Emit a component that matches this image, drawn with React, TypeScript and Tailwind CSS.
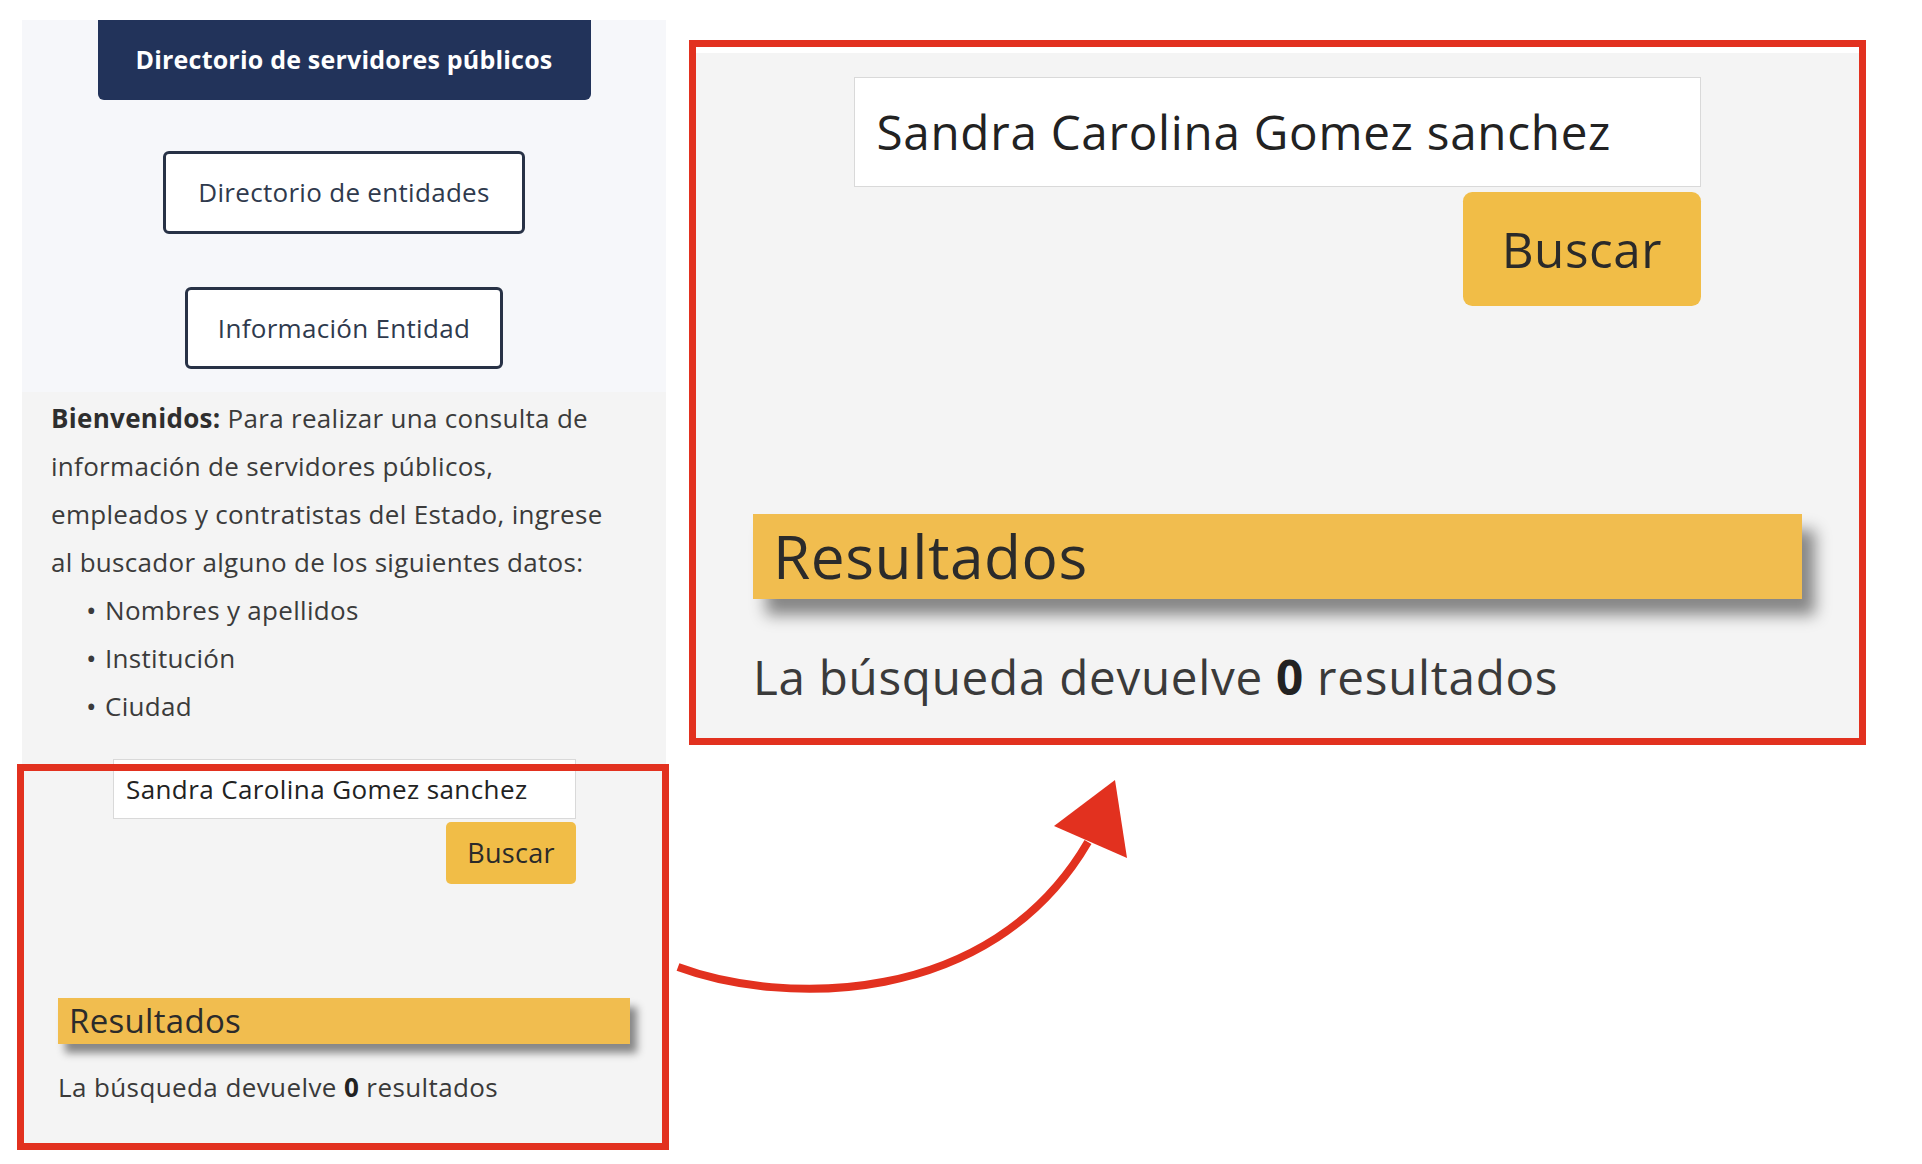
import type { ReactNode } from "react";

const items = ["Nombres y apellidos", "Institución", "Ciudad"];

function OutlineButton({ children, className }: { children: ReactNode; className: string }) {
  return (
    <button
      className={`flex items-center justify-center rounded-[6px] border-[3px] border-[#283246] bg-white text-[26px] tracking-[0.3px] text-[#2f3a4d] ${className}`}
    >
      {children}
    </button>
  );
}

// search box + results, reused at 1x in the phone and zoomed in the callout
function SearchBlock() {
  return (
    <div className="px-[36px] pt-[29px] pb-[43px]">
      <div className="ml-[55px] flex w-[463px] flex-col items-end">
        <input
          readOnly
          value="Sandra Carolina Gomez sanchez"
          className="h-[60px] w-full border border-[#d9d9d9] bg-white px-[12px] text-[26px] tracking-[0.4px] text-[#222] outline-none"
        />
        <button className="mt-[3px] h-[62px] w-[130px] rounded-[5px] bg-[#f1bd47] text-[27px] tracking-[0.3px] text-[#2a2a2a]">
          Buscar
        </button>
      </div>
      <div className="mt-[114px] flex h-[46px] items-center bg-[#f1bd4f] pl-[11px] text-[33px] tracking-[0.3px] text-[#2b2b2b] shadow-[7px_9px_8px_rgba(0,0,0,0.45)]">
        Resultados
      </div>
      <p className="mt-[27px] text-[26px] leading-[32px] tracking-[0.4px] text-[#3a3a3a]">
        La búsqueda devuelve <b className="text-[#222]">0</b> resultados
      </p>
    </div>
  );
}

export default function App() {
  return (
    <div className="relative flex h-[1164px] w-[1922px] items-start overflow-hidden bg-white font-['Open_Sans',sans-serif]">
      {/* phone page */}
      <div className="ml-[22px] mt-[20px] w-[644px]">
        <div className="flex flex-col items-center bg-[#f6f7fa] pb-[23px]">
          <button className="h-[80px] w-[493px] rounded-b-[6px] bg-[#22335a] text-[25px] font-bold tracking-[0.2px] text-white">
            Directorio de servidores públicos
          </button>
          <OutlineButton className="mt-[51px] h-[83px] w-[362px]">Directorio de entidades</OutlineButton>
          <OutlineButton className="mt-[53px] h-[82px] w-[318px]">Información Entidad</OutlineButton>
        </div>

        <div className="bg-[#f4f4f4]">
          <div className="px-[29px] pt-[2px] text-[26px] leading-[48px] tracking-[0.3px] text-[#3b3b3b] whitespace-nowrap">
            <p>
              <b className="text-[#2e2e2e]">Bienvenidos:</b> Para realizar una consulta de
              <br />
              información de servidores públicos,
              <br />
              empleados y contratistas del Estado, ingrese
              <br />
              al buscador alguno de los siguientes datos:
            </p>
            <ul className="ml-[35px]">
              {items.map((it) => (
                <li key={it} className="flex">
                  <span className="w-[19px] text-[28px]">•</span>
                  {it}
                </li>
              ))}
            </ul>
          </div>
          <SearchBlock />
        </div>
      </div>

      {/* zoomed callout */}
      <div className="ml-[23px] mt-[40px] h-[705px] w-[1177px] overflow-hidden border-[7px] border-[#e2311f] bg-[#f4f4f4]">
        <div className="h-[6px] bg-white" />
        <div className="-mx-[9px] -mt-[29px]">
          <div className="[zoom:1.83]">
            <SearchBlock />
          </div>
        </div>
      </div>

      {/* highlight frame around the search area */}
      <div className="pointer-events-none absolute left-[17px] top-[764px] h-[386px] w-[652px] border-[7px] border-[#e2311f]" />

      {/* arrow pointing to the callout */}
      <svg className="pointer-events-none absolute inset-0" width="1922" height="1164" viewBox="0 0 1922 1164">
        <path d="M678 967 C780 1005 990 1010 1088 842" fill="none" stroke="#e2311f" strokeWidth="8" />
        <polygon points="1115,780 1054,826 1127,858" fill="#e2311f" />
      </svg>
    </div>
  );
}
